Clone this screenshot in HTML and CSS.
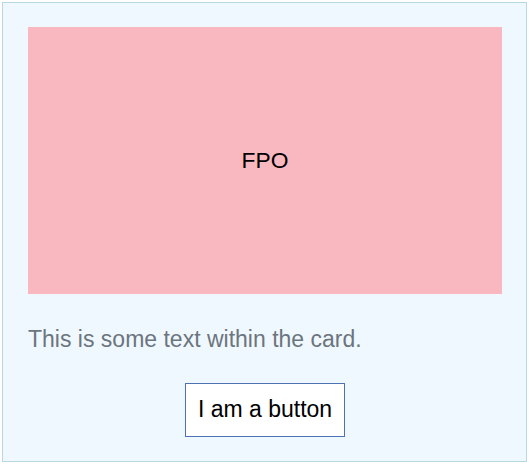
FILE: index.html
```html
<!DOCTYPE html>
<html>
<head>
<meta charset="utf-8">
<link rel="stylesheet" href="styles.css">
</head>
<body>
<div class="card">
  <div class="fpo">FPO</div>
  <p class="card-text">This is some text within the card.</p>
  <div class="actions"><button class="btn">I am a button</button></div>
</div>
</body>
</html>
```
FILE: styles.css
```css
html, body { margin: 0; padding: 0; background: #fff; }
body { font-family: "Liberation Sans", Arial, sans-serif; font-size: 22.4px; }
.card {
  margin: 2px;
  border: 1px solid #b7d7e3;
  background: #f0f8ff;
  padding: 24px 24px 24px 25px;
  box-sizing: border-box;
  height: 460px;
  display: flex;
  flex-direction: column;
}
.fpo {
  height: 267px;
  background: #f9b8bf;
  color: #000;
  display: flex;
  align-items: center;
  justify-content: center;
  font-size: 22.8px;
}
.card-text {
  margin: 32px 0 31px;
  color: #6c757d;
  line-height: 26px;
  font-size: 23px;
}
.actions { display: flex; justify-content: center; }
.btn {
  font-family: inherit;
  font-size: 23px;
  color: #000;
  background: #fff;
  border: 1px solid #4d71b3;
  padding: 0 12px 2px;
  height: 54px;
  border-radius: 0;
}
```
